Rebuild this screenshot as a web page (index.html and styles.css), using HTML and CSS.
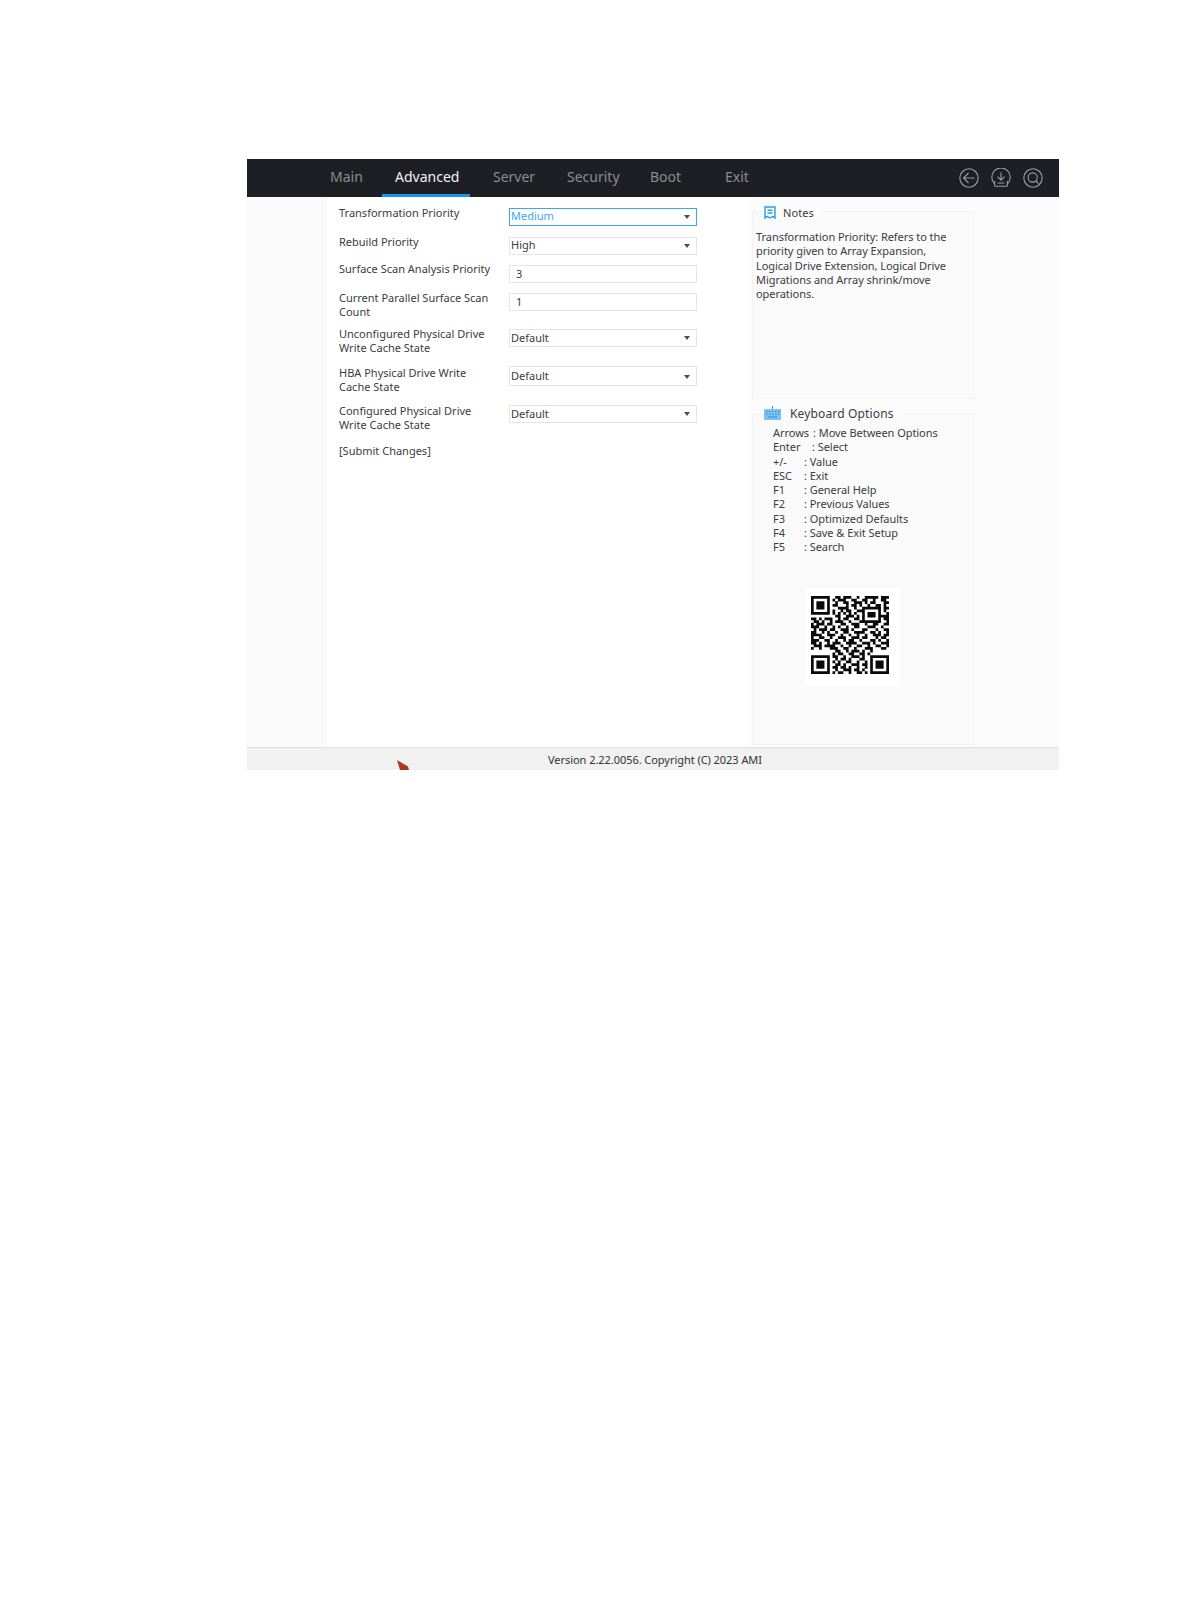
FILE: index.html
```html
<!DOCTYPE html>
<html lang="en">
<head>
<meta charset="utf-8">
<title>BIOS Setup - Advanced</title>
<link rel="stylesheet" href="styles.css">
</head>
<body>
<div class="frame">
  <header class="nav">
    <div class="tabs">
      <span class="tab">Main</span>
      <span class="tab active">Advanced</span>
      <span class="tab server">Server</span>
      <span class="tab">Security</span>
      <span class="tab">Boot</span>
      <span class="tab">Exit</span>
    </div>
    <div class="nav-icons">
      <svg class="nav-icon" viewBox="0 0 20 20"><circle cx="10" cy="10" r="9.2"/><path d="M15.5 10H4.5M9.5 5l-5 5 5 5"/></svg>
      <svg class="nav-icon" viewBox="0 0 20 20"><path d="M3.4 15.6A9.2 9.2 0 1 1 16.6 15.6"/><path d="M10 4.5V12M6.5 8.7 10 12.2l3.5-3.5M3.6 13v4.2q0 1 1 1h10.8q1 0 1-1V13M6.5 15h7"/></svg>
      <svg class="nav-icon" viewBox="0 0 20 20"><circle cx="10" cy="10" r="9.2"/><circle cx="9.7" cy="9.5" r="4.6"/><path d="M13 13l2.6 2.6"/></svg>
    </div>
  </header>
  <div class="content">
    <div class="gutter"></div>
    <main class="form">
      <div class="label">Transformation Priority</div>
      <div class="control select focus raised"><span>Medium</span><i class="caret"></i></div>
      <div class="label">Rebuild Priority</div>
      <div class="control select raised"><span>High</span><i class="caret"></i></div>
      <div class="label up">Surface Scan Analysis Priority</div>
      <div class="control input"><span>3</span></div>
      <div class="label">Current Parallel Surface Scan Count</div>
      <div class="control input"><span>1</span></div>
      <div class="label">Unconfigured Physical Drive Write Cache State</div>
      <div class="control select"><span>Default</span><i class="caret"></i></div>
      <div class="label low2">HBA Physical Drive Write Cache State</div>
      <div class="control select tall"><span>Default</span><i class="caret"></i></div>
      <div class="label low1">Configured Physical Drive Write Cache State</div>
      <div class="control select"><span>Default</span><i class="caret"></i></div>
      <div class="label low2">[Submit Changes]</div>
    </main>
    <aside class="side">
      <section class="panel notes">
        <div class="legend">
          <svg class="notes-icon" viewBox="0 0 12 13"><path d="M1 1h10v11L8.8 10.4 6 12 3.2 10.4 1 12zM3.5 4.2h5M3.5 7h5"/></svg>
          <span>Notes</span>
        </div>
        <p class="notes-text">Transformation Priority: Refers to the priority given to Array Expansion, Logical Drive Extension, Logical Drive Migrations and Array shrink/move operations.</p>
      </section>
      <section class="panel keys">
        <div class="legend kb">
          <svg class="kb-icon" viewBox="0 0 17 14"><path class="kb-body" d="M0 3h17v11H0z"/><path class="kb-keys" d="M2 5.5h1.5M5 5.500h1.500M8 5.500h1.500M11 5.500h1.500M14 5.500h1.500M2 8h1.500M5 8h1.500M8 8h1.500M11 8h1.500M14 8h1.500M4 11h9M8.500 3V0"/></svg>
          <span>Keyboard Options</span>
        </div>
        <ul class="key-list">
          <li><span class="key k-arrows">Arrows</span><span>: Move Between Options</span></li>
          <li><span class="key k-enter">Enter</span><span>: Select</span></li>
          <li><span class="key">+/-</span><span>: Value</span></li>
          <li><span class="key">ESC</span><span>: Exit</span></li>
          <li><span class="key">F1</span><span>: General Help</span></li>
          <li><span class="key">F2</span><span>: Previous Values</span></li>
          <li><span class="key">F3</span><span>: Optimized Defaults</span></li>
          <li><span class="key">F4</span><span>: Save &amp; Exit Setup</span></li>
          <li><span class="key">F5</span><span>: Search</span></li>
        </ul>
        <div class="qr-wrap">
          <svg class="qr" viewBox="0 0 29 29"><path d="M0 .5h7M9 .5h2M12 .5h3M17 .5h1M20 .5h5M26 .5h3M0 1.500h1M6 1.500h1M8 1.500h1M10 1.500h3M15 1.500h2M19 1.500h2M23 1.500h1M26 1.500h2M0 2.500h1M2 2.500h3M6 2.500h1M9 2.500h1M12 2.500h2M16 2.500h3M20 2.500h1M22 2.500h2M27 2.500h2M0 3.500h1M2 3.500h3M6 3.500h1M8 3.500h2M13 3.500h1M15 3.500h2M18 3.500h1M21 3.500h1M24 3.500h2M27 3.500h1M0 4.500h1M2 4.500h3M6 4.500h1M10 4.500h4M16 4.500h1M19 4.500h7M27 4.500h2M0 5.500h1M6 5.500h1M8 5.500h1M11 5.500h1M13 5.500h2M17 5.500h3M25 5.500h1M27 5.500h1M0 6.500h7M8 6.500h1M10 6.500h1M12 6.500h1M14 6.500h1M16 6.500h1M19 6.500h1M21 6.500h3M25 6.500h1M28 6.500h1M9 7.500h2M13 7.500h3M17 7.500h1M19 7.500h1M21 7.500h3M25 7.500h4M0 8.500h2M3 8.500h1M5 8.500h3M10 8.500h1M12 8.500h2M16 8.500h2M19 8.500h1M25 8.500h1M27 8.500h2M1 9.500h2M4 9.500h1M7 9.500h1M9 9.500h3M14 9.500h1M18 9.500h8M28 9.500h1M0 10.500h1M2 10.500h3M6 10.500h2M11 10.500h2M15 10.500h3M20 10.500h1M23 10.500h2M27 10.500h2M0 11.500h3M5 11.500h1M8 11.500h1M10 11.500h1M13 11.500h1M16 11.500h2M21 11.500h3M26 11.500h1M1 12.500h1M3 12.500h3M7 12.500h2M11 12.500h3M15 12.500h1M19 12.500h2M24 12.500h1M27 12.500h2M0 13.500h2M4 13.500h1M6 13.500h1M9 13.500h1M12 13.500h2M16 13.500h4M22 13.500h2M25 13.500h1M28 13.500h1M0 14.500h4M6 14.500h3M11 14.500h1M14 14.500h1M17 14.500h1M20 14.500h1M23 14.500h3M27 14.500h2M0 15.500h1M3 15.500h2M7 15.500h1M10 15.500h3M15 15.500h3M19 15.500h2M24 15.500h1M26 15.500h2M0 16.500h3M5 16.500h2M9 16.500h1M12 16.500h1M14 16.500h2M18 16.500h1M22 16.500h2M25 16.500h1M28 16.500h1M0 17.500h2M3 17.500h1M6 17.500h1M8 17.500h3M13 17.500h4M19 17.500h3M23 17.500h1M26 17.500h3M1 18.500h3M5 18.500h4M11 18.500h1M14 18.500h1M17 18.500h2M21 18.500h1M24 18.500h2M28 18.500h1M0 19.500h1M3 19.500h1M7 19.500h3M12 19.500h2M16 19.500h1M20 19.500h3M26 19.500h2M9 20.500h2M13 20.500h1M15 20.500h3M19 20.500h1M22 20.500h1M8 21.500h1M10 21.500h2M14 21.500h2M18 21.500h2M21 21.500h1M0 22.500h7M8 22.500h2M12 22.500h1M15 22.500h3M19 22.500h1M22 22.500h7M0 23.500h1M6 23.500h1M9 23.500h1M11 23.500h2M14 23.500h1M18 23.500h2M22 23.500h1M28 23.500h1M0 24.500h1M2 24.500h3M6 24.500h1M8 24.500h1M10 24.500h1M13 24.500h2M17 24.500h1M20 24.500h1M22 24.500h1M24 24.500h3M28 24.500h1M0 25.500h1M2 25.500h3M6 25.500h1M9 25.500h2M12 25.500h1M15 25.500h3M19 25.500h2M22 25.500h1M24 25.500h3M28 25.500h1M0 26.500h1M2 26.500h3M6 26.500h1M8 26.500h2M11 26.500h2M14 26.500h1M17 26.500h1M20 26.500h1M22 26.500h1M24 26.500h3M28 26.500h1M0 27.500h1M6 27.500h1M9 27.500h1M12 27.500h3M16 27.500h2M19 27.500h1M22 27.500h1M28 27.500h1M0 28.500h7M8 28.500h1M10 28.500h2M14 28.500h1M17 28.500h2M20 28.500h1M22 28.500h7"/></svg>
        </div>
      </section>
    </aside>
  </div>
  <footer class="foot">Version 2.22.0056. Copyright (C) 2023 AMI</footer>
  <svg class="cursor" viewBox="0 0 12 10"><path d="M0 0 11 6.500 12 10H3z"/></svg>
</div>
</body>
</html>
```
FILE: styles.css
```css
* { box-sizing: border-box; }
html, body { margin: 0; background: #fff; }
body {
  min-height: 1616px;
  padding: 159px 0 0 247px;
  font-family: "Noto Sans", "DejaVu Sans", sans-serif;
  font-size: 11px;
  color: #3a3c3e;
}
.frame { position: relative; width: 812px; height: 611px; display: flex; flex-direction: column; overflow: hidden; }

.nav { height: 38px; flex: none; background: #1d1f24; display: flex; justify-content: space-between; padding-left: 70px; padding-right: 16px; }
.tabs { display: grid; grid-template-columns: 65px 88px 84px 83px 75px 60px; }
.tab { padding: 7px 0 0 13px; font-size: 14px; line-height: 22px; color: #8a8d90; white-space: nowrap; }
.tab.server { padding-left: 23px; }
.tab.active { color: #f2f3f4; border-bottom: 3px solid #1a96e6; }
.nav-icons { display: flex; align-items: center; gap: 12px; padding-bottom: 1px; }
.nav-icon { width: 20px; height: 20px; fill: none; stroke: #9b9d9f; stroke-width: 1.1; }

.content { flex: 1; display: flex; min-height: 0; }
.gutter { width: 80px; background: #fafafa; }
.form {
  width: 423px; background: #fff; padding: 9px 0 0 12px;
  display: grid; grid-template-columns: 170px 188px;
  grid-template-rows: 29px 28px 28px 36px 37px 39px 39px auto;
  align-content: start;
}
.label { line-height: 14.3px; font-size: 11px; padding-right: 10px; color: #3a3c3e; }
.label.up { margin-top: -1px; }
.label.low1 { padding-top: 1px; }
.label.low2 { padding-top: 2px; }
.control { margin-top: 2px; height: 18px; padding-bottom: 2px; display: flex; align-items: center; justify-content: space-between; background: #fff; border: 1px solid #e3e4e4; font-size: 11px; }
.select { padding-left: 1px; padding-right: 6px; }
.select.raised { padding-bottom: 3px; }
.select.tall { height: 20px; padding-bottom: 1px; }
.input { padding-left: 6px; }
.focus { border: 1px solid #3aa9ea; color: #3aa9ea; }
.caret { width: 0; height: 0; margin-top: 2px; border-left: 3.500px solid transparent; border-right: 3.500px solid transparent; border-top: 4px solid #4a4c4e; }

.side { flex: 1; background: #fcfcfc; padding: 14px 0 0 2px; display: flex; flex-direction: column; gap: 15px; min-height: 0; }
.panel { width: 223px; background: #fafafa; border: 1px solid #f2f2f2; }
.notes { height: 188px; }
.keys { height: 331px; }
.legend { display: flex; width: fit-content; align-items: center; gap: 7px; margin: -7px 0 0 10px; padding: 0 9px 0 1px; height: 14px; background: #fcfcfc; font-size: 11px; letter-spacing: .1px; }
.legend.kb { gap: 9px; font-size: 12px; letter-spacing: .15px; margin-top: -9px; }
.notes-icon { width: 12px; height: 13px; fill: none; stroke: #2d9be0; stroke-width: 1.400; }
.kb-icon { width: 17px; height: 14px; }
.kb-body { fill: #7cc3ef; }
.kb-keys { fill: none; stroke: #2a8fd6; stroke-width: 1; }
.notes-text { margin: 11px 20px 0 3px; line-height: 14.300px; font-size: 11px; letter-spacing: -.05px; }

.key-list { list-style: none; margin: 6px 0 0; padding: 0 0 0 20px; line-height: 14.300px; letter-spacing: -.05px; }
.key-list li { display: flex; white-space: nowrap; }
.key { width: 31px; flex: none; }
.key.k-arrows { width: 40px; }
.key.k-enter { width: 39px; }
.qr-wrap { width: 95px; height: 98px; margin: 33px 0 0 52px; padding: 8px 6px; background: #fff; }
.qr { display: block; width: 78px; height: 78px; fill: none; stroke: #0a0a0a; stroke-width: 1.020; }

.foot { height: 23px; flex: none; padding-left: 4px; background: #f0f1f0; border-top: 1px solid #dfe1e0; display: flex; align-items: center; justify-content: center; font-size: 11px; letter-spacing: -.05px; color: #333; }
.cursor { position: absolute; left: 150px; top: 601px; width: 12px; height: 10px; fill: #a93a1e; }
```
